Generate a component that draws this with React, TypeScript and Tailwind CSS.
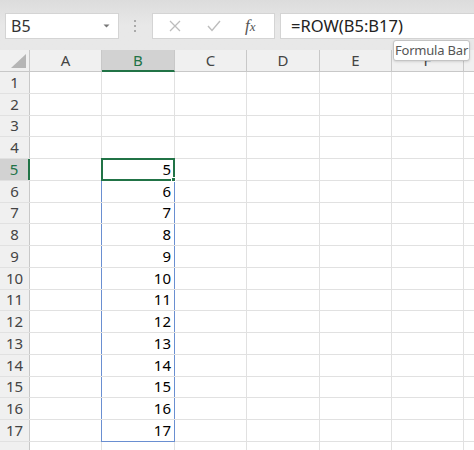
import React from "react";

const cols = [
  { key: "A", w: "w-[72px]" },
  { key: "B", w: "w-[73px]" },
  { key: "C", w: "w-[72px]" },
  { key: "D", w: "w-[73px]" },
  { key: "E", w: "w-[72px]" },
  { key: "F", w: "w-[72px]" },
  { key: "G", w: "w-[72px]" },
];

const rows = Array.from({ length: 18 }, (_, i) => i + 1);

function RowCell({ row, col, w }: { row: number; col: string; w: string }) {
  const isB = col === "B";
  const active = isB && row === 5;
  const inRange = isB && row >= 6 && row <= 17;
  return (
    <div className={`relative box-border h-full shrink-0 border-r border-[#e1e1e1] ${w}`}>
      {active && (
        <div className="absolute -left-px -top-px bottom-[-1px] right-[-1px] z-10 flex items-center justify-end border-2 border-[#217346] pr-[2px]">
          <span className="text-[15px] leading-none text-black">5</span>
          <span className="absolute -bottom-[3px] -right-[3px] h-[5px] w-[5px] border border-white bg-[#217346]" />
        </div>
      )}
      {inRange && (
        <div
          className={`absolute -left-px right-[-1px] top-0 flex items-center justify-end border-x border-[#6a8fd1] pr-[3px] ${
            row === 17 ? "bottom-[-1px] border-b" : "bottom-0"
          }`}
        >
          <span className="text-[15px] leading-none text-black">{row}</span>
        </div>
      )}
    </div>
  );
}

export default function App() {
  return (
    <div className="relative h-[450px] w-[474px] overflow-hidden bg-white font-['Noto_Sans',sans-serif]">
      {/* formula bar */}
      <div className="flex h-[50px] items-start bg-gradient-to-b from-[#dcdcdc] via-[#e8e8e8] to-[#e8e8e8] pt-[13px]">
        <div className="ml-[5px] flex h-[26px] w-[114px] items-center justify-between border border-[#d4d4d4] bg-white pl-[5px] pr-[8px]">
          <span className="text-[16px] text-[#333]">B5</span>
          <svg width="7" height="4" viewBox="0 0 7 4">
            <path d="M0.5 0.5 L3.5 3.5 L6.5 0.5 Z" fill="#777" />
          </svg>
        </div>
        <div className="ml-[15px] mt-[7px] flex flex-col gap-[3px]">
          <span className="h-[2px] w-[2px] bg-[#aaa]" />
          <span className="h-[2px] w-[2px] bg-[#aaa]" />
          <span className="h-[2px] w-[2px] bg-[#aaa]" />
        </div>
        <div className="ml-[16px] flex h-[26px] w-[123px] items-center border border-[#d4d4d4] bg-white">
          <svg className="ml-[16px]" width="12" height="12" viewBox="0 0 12 12">
            <path d="M1 1 L11 11 M11 1 L1 11" stroke="#bdbdbd" strokeWidth="1.3" />
          </svg>
          <svg className="ml-[26px]" width="14" height="12" viewBox="0 0 14 12">
            <path d="M1 6 L5 10.5 L13 1" stroke="#bdbdbd" strokeWidth="1.4" fill="none" />
          </svg>
          <span className="ml-[24px] font-['Liberation_Serif',serif] text-[17px] italic text-[#555]">
            f<span className="text-[13px]">x</span>
          </span>
        </div>
        <div className="ml-[5px] flex h-[26px] flex-1 items-center border border-r-0 border-[#d4d4d4] bg-white pl-[10px]">
          <span className="text-[16.5px] text-[#222]">=ROW(B5:B17)</span>
        </div>
      </div>

      {/* column headers */}
      <div className="flex h-[22px] bg-[#f0f0f0]">
        <div className="relative box-border h-full w-[30px] shrink-0 border-b border-r border-[#c8c8c8]">
          <svg className="absolute bottom-[3px] right-[3px]" width="15" height="14" viewBox="0 0 15 14">
            <path d="M15 0 L15 14 L0 14 Z" fill="#b5b5b5" />
          </svg>
        </div>
        {cols.map((c) => (
          <div
            key={c.key}
            className={`box-border flex h-full shrink-0 items-center justify-center border-r ${c.w} ${
              c.key === "B"
                ? "border-b-2 border-[#c8c8c8] border-b-[#217346] bg-[#d2d2d2] text-[#217346]"
                : "border-b border-[#c8c8c8] text-[#444]"
            }`}
          >
            <span className="text-[15px] leading-none">{c.key}</span>
          </div>
        ))}
      </div>

      {/* rows */}
      {rows.map((r) => (
        <div key={r} className="flex h-[21.75px] box-border border-b border-[#e1e1e1]">
          <div
            className={`box-border flex h-full w-[30px] shrink-0 items-center justify-center border-r ${
              r === 5
                ? "border-r-2 border-r-[#217346] bg-[#d2d2d2] text-[#217346]"
                : "border-[#c8c8c8] bg-[#f0f0f0] text-[#444]"
            }`}
          >
            {r < 18 && <span className="text-[15px] leading-none">{r}</span>}
          </div>
          {cols.map((c) => (
            <RowCell key={c.key} row={r} col={c.key} w={c.w} />
          ))}
        </div>
      ))}

      {/* tooltip */}
      <div className="absolute left-[393px] top-[40px] z-20 flex h-[21px] w-[77px] items-center justify-center whitespace-nowrap rounded-[3px] border border-[#c4c4c4] bg-white shadow-sm">
        <span className="text-[13px] leading-none tracking-[-0.2px] text-[#555]">Formula Bar</span>
      </div>
    </div>
  );
}
